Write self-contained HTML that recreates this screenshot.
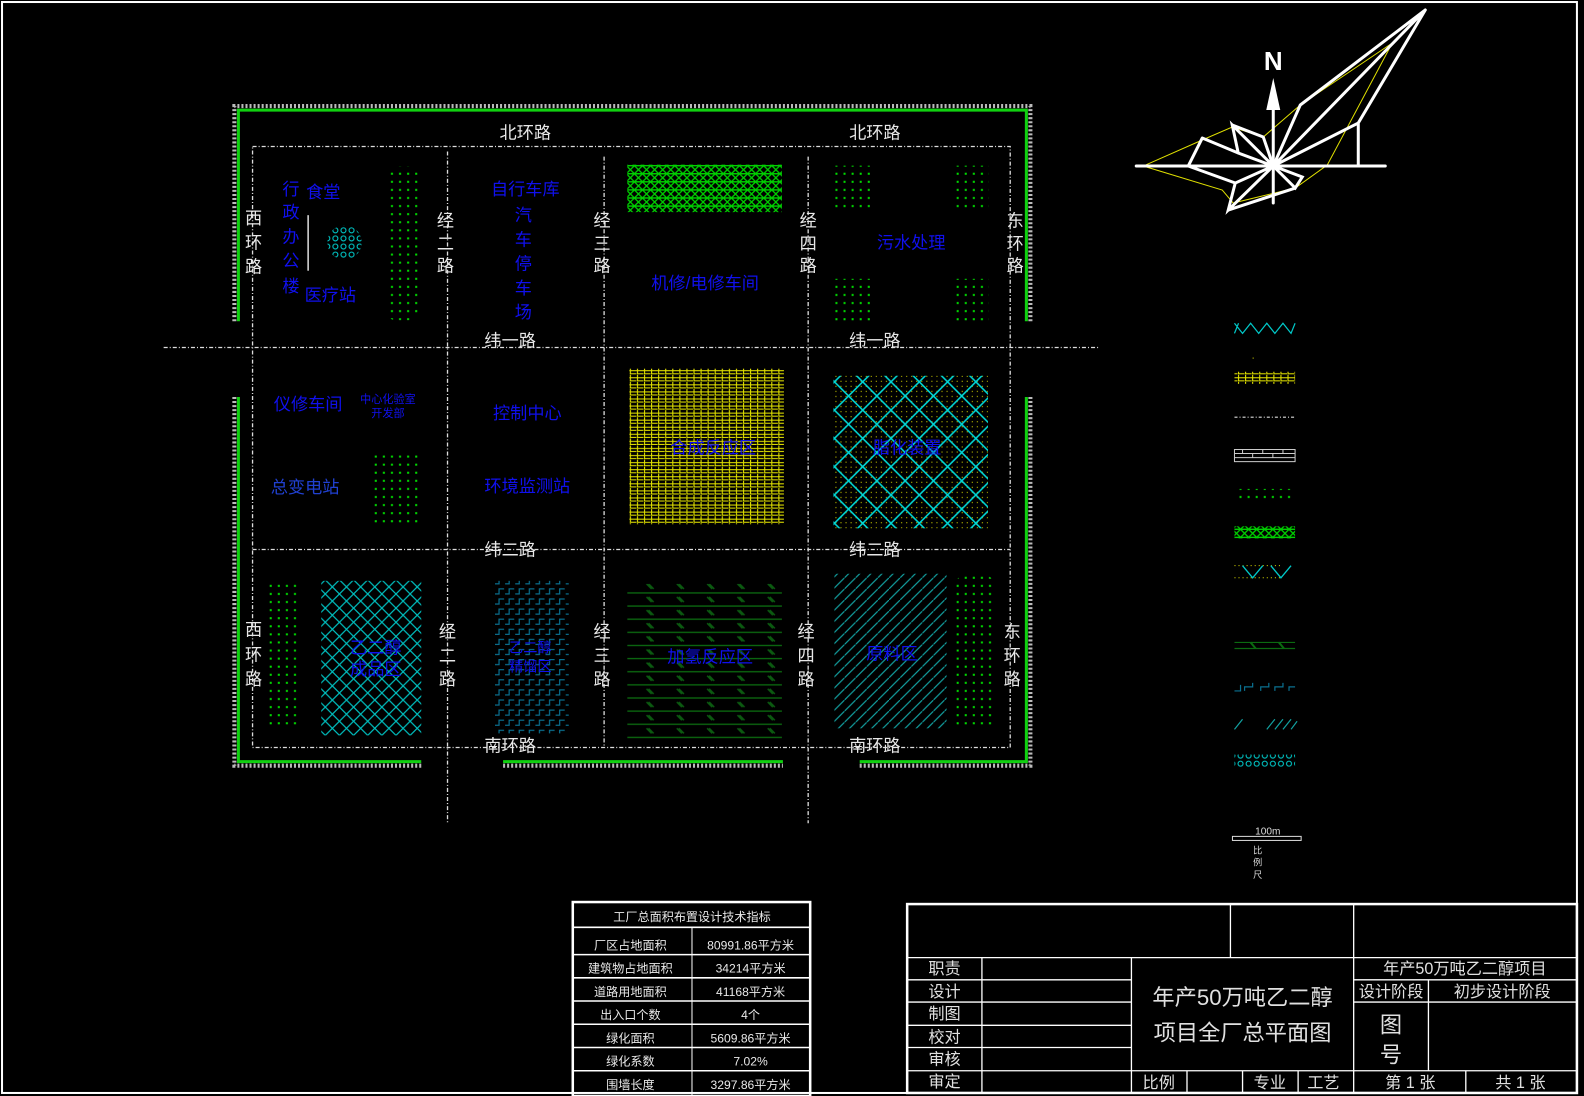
<!DOCTYPE html>
<html><head><meta charset="utf-8"><style>
html,body{margin:0;padding:0;background:#000;width:1584px;height:1096px;overflow:hidden}
svg{position:absolute;left:0;top:0}
text{font-family:"Liberation Sans","Noto Sans CJK SC",sans-serif}
.w{fill:#e8e8e8;font-size:17px}
.b{fill:#1010ee;font-size:17px}
.t{fill:#e8e8e8;font-size:12px}
.tb{fill:#e0e0e0;font-size:16px}
</style></head><body>
<svg width="1584" height="1096" viewBox="0 0 1568 1085" preserveAspectRatio="none">
<defs>
<pattern id="gd" width="8" height="8" patternUnits="userSpaceOnUse"><rect x="3" y="3" width="2" height="2" fill="#00e000"/></pattern>
<pattern id="cc" width="8" height="8" patternUnits="userSpaceOnUse"><circle cx="4" cy="4" r="2.5" fill="none" stroke="#00d0d0" stroke-width="1"/></pattern>
<pattern id="gh" width="8" height="8" patternUnits="userSpaceOnUse"><path d="M0 0L8 8M8 0L0 8M0 4H8" stroke="#00d000" stroke-width="1.3"/></pattern>
<pattern id="yg" width="7" height="7" patternUnits="userSpaceOnUse"><path d="M1 0V6H7M0 3H7" stroke="#e0e000" stroke-width="1.1" fill="none"/></pattern>
<pattern id="yd" width="5" height="5" patternUnits="userSpaceOnUse"><rect x="2" y="2" width="1" height="1" fill="#e0e000"/></pattern>
<pattern id="cd" width="28" height="28" patternUnits="userSpaceOnUse"><path d="M0 0L28 28M28 0L0 28" stroke="#00d8d8" stroke-width="1.5"/></pattern>
<pattern id="cx" width="14" height="14" patternUnits="userSpaceOnUse"><path d="M0 0L14 14M14 0L0 14" stroke="#00c0c0" stroke-width="1.2"/></pattern>
<pattern id="st" width="10" height="10" patternUnits="userSpaceOnUse"><path d="M0 8H4V3H9" stroke="#0a7090" stroke-width="1.2" fill="none"/></pattern>
<pattern id="dg" width="30" height="13" patternUnits="userSpaceOnUse"><path d="M0 2H30" stroke="#0b6a10" stroke-width="1.3"/><path d="M10 6L15 11M12 6L17 11" stroke="#0b5a10" stroke-width="1.5"/></pattern>
<pattern id="td" width="11" height="11" patternUnits="userSpaceOnUse"><path d="M-1 12L12 -1" stroke="#12a0a0" stroke-width="1.2"/></pattern>
</defs>

<!-- outer frame -->
<rect x="2" y="2" width="1559" height="1080" fill="none" stroke="#fff" stroke-width="2"/>

<!-- fence -->
<g fill="none">
<path d="M232 318V105H1020V318M232 393V758H417M498 758H775M851 758H1020V393" stroke="#bbb" stroke-width="4" stroke-dasharray="2 2"/>
<path d="M236 318V109H1016V318M236 393V754H417M498 754H775M851 754H1016V393" stroke="#10d010" stroke-width="3"/>
</g>

<!-- roads -->
<g stroke="#ddd" stroke-width="1.3" stroke-dasharray="4 2 1 2" fill="none">
<rect x="250" y="145" width="750" height="595"/>
<path d="M162 344H1088M250 544H1000M443 150V815M598 155V740M800 155V815"/>
</g>

<!-- road labels -->
<g class="w" text-anchor="middle">
<text x="520" y="137">北环路</text><text x="866" y="137">北环路</text>
<text x="505" y="343">纬一路</text><text x="866" y="343">纬一路</text>
<text x="505" y="550">纬二路</text><text x="866" y="550">纬二路</text>
<text x="505" y="744">南环路</text><text x="866" y="744">南环路</text>
<text x="251" y="222">西</text><text x="251" y="246">环</text><text x="251" y="270">路</text>
<text x="441" y="224">经</text><text x="441" y="247">二</text><text x="441" y="269">路</text>
<text x="596" y="224">经</text><text x="596" y="247">三</text><text x="596" y="269">路</text>
<text x="800" y="224">经</text><text x="800" y="247">四</text><text x="800" y="269">路</text>
<text x="1005" y="224">东</text><text x="1005" y="247">环</text><text x="1005" y="269">路</text>
<text x="251" y="629">西</text><text x="251" y="654">环</text><text x="251" y="678">路</text>
<text x="443" y="631">经</text><text x="443" y="655">二</text><text x="443" y="678">路</text>
<text x="596" y="631">经</text><text x="596" y="655">三</text><text x="596" y="678">路</text>
<text x="798" y="631">经</text><text x="798" y="655">四</text><text x="798" y="678">路</text>
<text x="1002" y="631">东</text><text x="1002" y="655">环</text><text x="1002" y="678">路</text>
</g>

<!-- hatched blocks -->
<rect x="382" y="165" width="32" height="152" rx="10" fill="url(#gd)"/>
<circle cx="341" cy="240" r="17" fill="url(#cc)"/>
<path d="M305 213V268" stroke="#fff" stroke-width="1.3"/>
<rect x="621" y="163" width="153" height="47" fill="url(#gh)"/>
<rect x="822" y="164" width="42" height="42" fill="url(#gd)"/>
<rect x="943" y="164" width="36" height="42" fill="url(#gd)"/>
<rect x="822" y="276" width="42" height="42" fill="url(#gd)"/>
<rect x="943" y="276" width="36" height="42" fill="url(#gd)"/>
<rect x="623" y="365" width="153" height="154" fill="url(#yg)"/>
<rect x="825" y="372" width="153" height="151" fill="url(#yd)"/>
<rect x="825" y="372" width="153" height="151" fill="url(#cd)"/>
<rect x="368" y="446" width="47" height="74" fill="url(#gd)"/>
<rect x="264" y="575" width="34" height="147" rx="10" fill="url(#gd)"/>
<rect x="318" y="575" width="99" height="153" fill="url(#cx)"/>
<rect x="490" y="575" width="73" height="151" fill="url(#st)"/>
<rect x="621" y="578" width="153" height="155" fill="url(#dg)"/>
<rect x="826" y="568" width="111" height="153" fill="url(#td)"/>
<rect x="945" y="570" width="40" height="151" rx="10" fill="url(#gd)"/>

<!-- blue labels -->
<g class="b" text-anchor="middle">
<text x="288" y="193">行</text><text x="288" y="216">政</text><text x="288" y="240">办</text><text x="288" y="264">公</text><text x="288" y="289">楼</text>
<text x="320" y="196">食堂</text>
<text x="327" y="298">医疗站</text>
<text x="520" y="193">自行车库</text>
<text x="518" y="219">汽</text><text x="518" y="243">车</text><text x="518" y="267">停</text><text x="518" y="291">车</text><text x="518" y="315">场</text>
<text x="698" y="286">机修/电修车间</text>
<text x="902" y="246">污水处理</text>
<text x="305" y="406">仪修车间</text>
<text x="384" y="399" style="font-size:11px">中心化验室</text>
<text x="384" y="413" style="font-size:11px">开发部</text>
<text x="522" y="415">控制中心</text>
<text x="302" y="488" style="fill:#2040d0">总变电站</text>
<text x="522" y="487">环境监测站</text>
<text x="706" y="449">合成反应区</text>
<text x="898" y="449">脂化装置</text>
<text x="372" y="647">乙二醇</text><text x="372" y="668">成品区</text>
<text x="525" y="646" style="font-size:14px">乙二醇</text><text x="525" y="665" style="font-size:14px">精馏区</text>
<text x="703" y="656">加氢反应区</text>
<text x="883" y="653">原料区</text>
</g>

<!-- compass (actual px coords scaled) -->
<g transform="scale(0.9901)" stroke-linecap="round" fill="none">
<path d="M1143 166L1202 140L1232 127L1263 137L1300 105L1392 43L1327 165L1295 188L1233 203L1222 190Z" stroke="#e0e000" stroke-width="1"/>
<g stroke="#fff" stroke-width="3">
<path d="M1136 166H1385"/>
<path d="M1273 166L1425 10L1300 105L1273 166M1273 166L1358 123V166M1273 166L1188 166L1202 138M1273 166L1232 125L1238 153L1273 166M1273 166L1263 137M1273 166L1228 210L1235 183L1273 166M1273 166L1295 188L1302 177L1273 166M1425 10L1358 123M1425 10L1273 166M1188 166L1235 183M1202 138L1238 153M1232 125L1263 137M1228 210L1295 188"/>
<path d="M1273 203V110"/>
</g>
<path d="M1273 78L1266 110H1280Z" fill="#fff"/>
<text x="1273" y="70" text-anchor="middle" style="font-size:26px;font-weight:bold;fill:#fff;stroke:none">N</text>
</g>

<!-- legend -->
<g>
<path d="M1222 320L1230 330L1238 320L1246 330L1254 320L1262 330L1270 320L1278 330M1222 330L1226 320M1230 330L1238 320L1246 330L1254 320L1262 330L1270 320L1278 330L1282 320" stroke="#00c8c8" stroke-width="1.2" fill="none"/>
<rect x="1240" y="354" width="1" height="1" fill="#e0e000"/>
<rect x="1222" y="368" width="60" height="12" fill="url(#yg)"/>
<path d="M1222 413H1282" stroke="#ddd" stroke-width="1.2" stroke-dasharray="3 2 1 2"/>
<rect x="1222" y="445" width="60" height="12" fill="none" stroke="#ccc" stroke-width="1"/>
<path d="M1222 449H1282M1222 453H1282M1230 445V449M1240 449V453M1250 445V449M1260 449V453M1270 445V449" stroke="#ccc" stroke-width="1"/>
<rect x="1222" y="484" width="60" height="14" fill="url(#gd)"/>
<rect x="1222" y="521" width="60" height="12" fill="url(#gh)"/>
<path d="M1222 560H1270M1222 572H1268" stroke="#e0e000" stroke-dasharray="1 3"/>
<path d="M1240 560L1250 572L1260 560M1268 560L1278 572L1288 560" stroke="#00c8c8" stroke-width="1.3" fill="none" transform="translate(-10,0)"/>
<path d="M1222 636H1282M1222 642H1282" stroke="#0b6a10" stroke-width="1.2"/>
<path d="M1238 636L1243 642M1266 636L1271 642" stroke="#0b6a10" stroke-width="2"/>
<path d="M1222 684H1228V678M1232 684V680H1240V676M1248 684V680H1256V676M1262 684V680H1270V676M1276 684V680H1282" stroke="#0a7090" stroke-width="1.2" fill="none"/>
<path d="M1222 722L1230 712M1262 722L1270 712M1270 722L1278 712M1278 722L1284 714M1254 722L1262 712" stroke="#12a0a0" stroke-width="1.2"/>
<rect x="1222" y="747" width="60" height="12" fill="url(#cc)"/>
<rect x="1220" y="828" width="68" height="4" fill="none" stroke="#ddd" stroke-width="1"/>
<text x="1255" y="826" text-anchor="middle" style="font-size:10px;fill:#ddd">100m</text>
<text x="1245" y="845" text-anchor="middle" style="font-size:9px;fill:#ddd">比</text>
<text x="1245" y="857" text-anchor="middle" style="font-size:9px;fill:#ddd">例</text>
<text x="1245" y="869" text-anchor="middle" style="font-size:9px;fill:#ddd">尺</text>
</g>

<!-- tech table -->
<g stroke="#fff" fill="none">
<rect x="567" y="893" width="235" height="192" stroke-width="2.5"/>
<path d="M567 918H802M567 945H802M567 968H802M567 991H802M567 1014H802M567 1037H802M567 1060H802" stroke-width="1.5"/>
<path d="M685 918V1085" stroke-width="1"/>
</g>
<g class="t" text-anchor="middle">
<text x="685" y="912">工厂总面积布置设计技术指标</text>
<text x="624" y="940">厂区占地面积</text><text x="743" y="940">80991.86平方米</text>
<text x="624" y="963">建筑物占地面积</text><text x="743" y="963">34214平方米</text>
<text x="624" y="986">道路用地面积</text><text x="743" y="986">41168平方米</text>
<text x="624" y="1009">出入口个数</text><text x="743" y="1009">4个</text>
<text x="624" y="1032">绿化面积</text><text x="743" y="1032">5609.86平方米</text>
<text x="624" y="1055">绿化系数</text><text x="743" y="1055">7.02%</text>
<text x="624" y="1078">围墙长度</text><text x="743" y="1078">3297.86平方米</text>
</g>

<!-- title block -->
<g stroke="#fff" fill="none" stroke-width="1.3">
<rect x="898" y="895" width="663" height="187" stroke-width="2.5"/>
<path d="M898 948H1561M898 970H1120M898 992H1120M898 1015H1120M898 1037H1120M898 1060H1561M1340 970H1561M1340 992H1561"/>
<path d="M1218 895V948M1340 895V1082M972 948V1082M1120 948V1082M1175 1060V1082M1230 1060V1082M1285 1060V1082M1414 970V1060M1451 1060V1082"/>
</g>
<g class="tb" text-anchor="middle">
<text x="935" y="964">职责</text><text x="935" y="987">设计</text><text x="935" y="1009">制图</text><text x="935" y="1032">校对</text><text x="935" y="1054">审核</text><text x="935" y="1076">审定</text>
<text x="1230" y="995" style="font-size:22px">年产50万吨乙二醇</text>
<text x="1230" y="1030" style="font-size:22px">项目全厂总平面图</text>
<text x="1450" y="964">年产50万吨乙二醇项目</text>
<text x="1377" y="987">设计阶段</text><text x="1487" y="987">初步设计阶段</text>
<text x="1377" y="1022" style="font-size:22px">图</text><text x="1377" y="1052" style="font-size:22px">号</text>
<text x="1147" y="1077">比例</text><text x="1257" y="1077">专业</text><text x="1310" y="1077">工艺</text>
<text x="1396" y="1077">第 1 张</text><text x="1505" y="1077">共 1 张</text>
</g>
</svg>
</body></html>
